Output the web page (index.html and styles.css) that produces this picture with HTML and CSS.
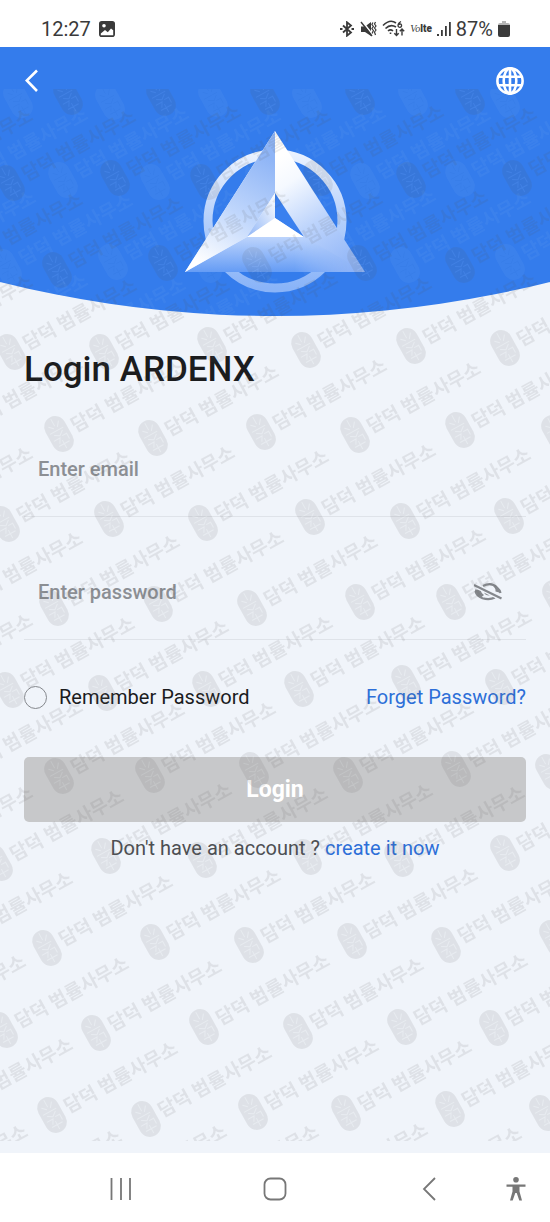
FILE: index.html
```html
<!DOCTYPE html>
<html lang="en">
<head>
    <meta charset="utf-8">
    <meta name="viewport" content="width=device-width, initial-scale=1">
    <title>Login ARDENX</title>
    <link rel="stylesheet" href="styles.css">
</head>
<body>
    <div class="status-bar">
        <span class="clock">12:27</span>
        <svg class="photo-icon" width="16" height="16" viewBox="0 0 16 16">
            <rect x="0.8" y="0.8" width="14.4" height="14.4" rx="2" fill="#3a3a3a" stroke="#3a3a3a" stroke-width="1.6"/>
            <path d="M1.800 12.500L6 9l2.800 2.200L12 7.500l2.200 1.800v4.900H1.800z" fill="#fff"/>
            <circle cx="5" cy="4.8" r="1.8" fill="#fff"/>
        </svg>
        <div class="status-icons">
            <svg width="16" height="16" viewBox="0 0 16 16" fill="none" stroke="#3a3a3a" stroke-width="1.8">
                <path d="M4 4.5l8 7-4 3.2V1.300l4 3.200-8 7"/>
                <path d="M1 8h2.500M12.500 8H15" stroke-width="2.200"/>
            </svg>
            <svg width="17" height="16" viewBox="0 0 17 16">
                <path d="M1 5.5h4L11 1v14l-6-4H1z" fill="#3a3a3a"/>
                <path d="M2 0l11 14" stroke="#fff" stroke-width="1.600"/>
                <path d="M1 1l11 14" stroke="#3a3a3a" stroke-width="1.4"/>
                <path d="M12.900 1.500l-1 2 1.500 2-1.500 2 1.500 2-1.300 3M15.500 1l-1 2 1.500 2-1.500 2 1.500 2-1.500 2 1 3" fill="none" stroke="#3a3a3a" stroke-width="1.2"/>
            </svg>
            <svg class="wifi" width="23" height="17" viewBox="0 0 23 17" fill="none" stroke="#3a3a3a" stroke-width="1.6">
                <path d="M1 5.5Q8 -1.5 14 3M3.5 8.5Q8.5 3.5 14 7M6 11q2.500-2.200 5 0"/>
                <path d="M8.500 12.500v1.500"/>
                <path d="M19 1.500Q16 3 16 5.500a1.800 1.800 0 1 0 3-1.300q-1.500-.6-2.700.6" stroke-width="1.300"/>
                <path d="M14.500 9v6.500m-2.200-2.200l2.200 2.200 2.200-2.200M20 15.500V9m-2.200 2.200L20 9l2.200 2.200" stroke-width="1.400"/>
            </svg>
            <span class="volte"><i>Vo</i><b>lte</b></span>
            <svg class="signal" width="14" height="16" viewBox="0 0 14 16" fill="#3a3a3a">
                <path d="M0 13h2v2H0zM4 9h1.800v6H4zM8 5h1.800v10H8zM12 1h1.800v14H12z"/>
            </svg>
            <span class="percent">87%</span>
            <svg width="12" height="16" viewBox="0 0 12 16">
                <path d="M4 0h4v2h2q2 0 2 2v2H0V4q0-2 2-2h2z" fill="#b5b5b5"/>
                <path d="M0 4h12v10q0 2-2 2H2q-2 0-2-2z" fill="#3a3a3a"/>
            </svg>
        </div>
    </div>

    <main class="app">
        <header class="hero">
            <svg class="marks marks-light" id="lightMarks" aria-hidden="true"></svg>
            <div class="toolbar">
                <button class="icon-button" type="button" aria-label="Back">
                    <svg width="14" height="24" viewBox="0 0 14 24" fill="none" stroke="#fff" stroke-width="2.600">
                        <path d="M12 1.500L1.800 11.500 12 22"/>
                    </svg>
                </button>
                <button class="icon-button" type="button" aria-label="Language">
                    <svg width="28" height="28" viewBox="0 0 28 28" fill="none" stroke="#fff" stroke-width="2.600">
                        <circle cx="14" cy="14" r="12.600"/>
                        <ellipse cx="14" cy="14" rx="6.300" ry="12.600"/>
                        <path d="M14 1.400v25.200M3 9.800h22M3 18.200h22"/>
                    </svg>
                </button>
            </div>
            <svg class="logo" width="180" height="164" viewBox="0 0 180 164" role="img" aria-label="ARDENX logo">
                <defs>
                    <linearGradient id="ring" x1="0" y1="0" x2="0" y2="1">
                        <stop offset="0" stop-color="#eaf2ff"/>
                        <stop offset="0.500" stop-color="#b4cffb"/>
                        <stop offset="1" stop-color="#8ab4f8"/>
                    </linearGradient>
                    <linearGradient id="leftFace" gradientUnits="userSpaceOnUse" x1="88" y1="30" x2="25" y2="140">
                        <stop offset="0" stop-color="#8fb5f6"/>
                        <stop offset="0.500" stop-color="#bfd6fc"/>
                        <stop offset="1" stop-color="#fff"/>
                    </linearGradient>
                    <linearGradient id="rightFace" gradientUnits="userSpaceOnUse" x1="90" y1="30" x2="165" y2="142">
                        <stop offset="0" stop-color="#fff"/>
                        <stop offset="0.200" stop-color="#f5f9ff"/>
                        <stop offset="0.550" stop-color="#bdd4fc"/>
                        <stop offset="1" stop-color="#8db3f7"/>
                    </linearGradient>
                    <linearGradient id="bottomFace" gradientUnits="userSpaceOnUse" x1="90" y1="107" x2="90" y2="142">
                        <stop offset="0" stop-color="#bdd4fc"/>
                        <stop offset="1" stop-color="#659cf5"/>
                    </linearGradient>
                    <linearGradient id="bottomFade" gradientUnits="userSpaceOnUse" x1="110" y1="0" x2="165" y2="0">
                        <stop offset="0" stop-color="#fff"/>
                        <stop offset="1" stop-color="#000"/>
                    </linearGradient>
                    <mask id="bottomMask">
                        <rect width="180" height="164" fill="url(#bottomFade)"/>
                    </mask>
                    <linearGradient id="innerFace" x1="0" y1="1" x2="1" y2="0">
                        <stop offset="0" stop-color="#8fb5f6"/>
                        <stop offset="1" stop-color="#fff"/>
                    </linearGradient>
                </defs>
                <circle cx="90" cy="91" r="67" fill="none" stroke="url(#ring)" stroke-width="9"/>
                <path d="M90 1L180 142H0z" fill="url(#rightFace)"/>
                <path d="M0 142l62-35h57l61 35z" fill="url(#bottomFace)" mask="url(#bottomMask)"/>
                <path d="M90 1v62l-28 44L0 142z" fill="url(#leftFace)"/>
                <path d="M90 63v25l-28 19z" fill="url(#innerFace)"/>
                <path d="M90 63l29 44-29-19z" fill="#3a80ef"/>
                <path d="M62 107l28-19 29 19z" fill="#fff"/>
            </svg>
        </header>

        <form class="login-form">
            <h1>Login ARDENX</h1>
            <div class="field">
                <input type="email" placeholder="Enter email" aria-label="Enter email">
            </div>
            <div class="field">
                <input type="password" placeholder="Enter password" aria-label="Enter password">
                <button class="icon-button" type="button" aria-label="Show password">
                    <svg width="28" height="20" viewBox="0 0 28 20" fill="none" stroke="#85888d">
                        <path d="M9 4Q17-.5 23 5.500q3 2.500 3.500 5.500M1.500 9q1 5 7 7.200 7 2 12.500-.7" stroke-width="2.200"/>
                        <path d="M1 7.500Q.5 12 7 15.500L10 13Q6.500 10.500 7 7.500z" fill="#85888d" stroke="none"/>
                        <path d="M17.500 3q4.500 2.500 4 6.500l5.500 1.500Q25 4 17.500 3z" fill="#85888d" stroke="none"/>
                        <path d="M11 9.500q0 3 4.500 3" stroke-width="1.800"/>
                        <path d="M0 3.500L27.500 17" stroke="#f0f4fa" stroke-width="4"/>
                        <path d="M0 3L27.500 16.500" stroke-width="2.200"/>
                    </svg>
                </button>
            </div>
            <div class="options">
                <label class="remember"><input type="checkbox">Remember Password</label>
                <a href="#">Forget Password?</a>
            </div>
            <button class="submit" type="submit">Login</button>
            <p class="signup">Don't have an account ? <a href="#">create it now</a></p>
        </form>

        <svg class="marks marks-dark" id="darkMarks" aria-hidden="true"></svg>
    </main>

    <nav class="nav-bar">
        <button class="icon-button recents" type="button" aria-label="Recent apps">
            <svg width="22" height="22" viewBox="0 0 22 22" stroke="#777" stroke-width="1.800">
                <path d="M1.500 0v22M11 0v22M20 0v22"/>
            </svg>
        </button>
        <button class="icon-button" type="button" aria-label="Home">
            <svg width="24" height="24" viewBox="0 0 24 24" fill="none" stroke="#777" stroke-width="1.800">
                <rect x="1.500" y="1.500" width="21" height="21" rx="6"/>
            </svg>
        </button>
        <button class="icon-button" type="button" aria-label="Back">
            <svg width="14" height="24" viewBox="0 0 14 24" fill="none" stroke="#777" stroke-width="1.800">
                <path d="M13 1L2 12l11 11"/>
            </svg>
        </button>
        <button class="icon-button accessibility" type="button" aria-label="Accessibility">
            <svg width="20" height="24" viewBox="0 0 20 24" fill="#777">
                <circle cx="10" cy="2.800" r="2.800"/>
                <path d="M.5 7.500h19v2.200h-6v4.800l2.500 9h-2.700L10.700 16H9.300l-2.600 7.500H4l2.500-9V9.700h-6z"/>
            </svg>
        </button>
    </nav>

    <script>
        // centre of each stamp, x and y
        const darkStamps = [
            [68, 8], [161, 9], [265, 8], [360, 8], [470, 8],
            [-93, 93], [10, 94], [115, 89], [205, 93], [318, 89], [411, 91], [517, 89],
            [-43, 177], [57, 181], [163, 174], [257, 176], [362, 174], [460, 176],
            [-93, 259], [11, 263], [104, 263], [212, 256], [306, 261], [411, 257], [505, 259],
            [-43, 341], [59, 345], [153, 349], [261, 343], [355, 346], [460, 341], [556, 344],
            [-93, 431], [5, 435], [109, 430], [203, 434], [310, 428], [405, 432], [509, 427],
            [-43, 516], [54, 519], [158, 515], [252, 519], [360, 513], [451, 513], [557, 509],
            [-93, 598], [9, 601], [103, 604], [207, 600], [299, 600], [406, 594], [500, 598],
            [-43, 684], [59, 687], [150, 686], [254, 681], [348, 686], [456, 680], [550, 683],
            [-93, 770], [-2, 774], [106, 767], [202, 771], [307, 768], [399, 770], [505, 764],
            [-53, 856], [47, 859], [155, 853], [249, 856], [352, 852], [446, 856], [554, 849],
            [-100, 939], [3, 941], [96, 944], [204, 938], [298, 942], [402, 938], [494, 939],
            [-53, 1022], [52, 1026], [146, 1030], [253, 1023], [346, 1024], [450, 1020], [544, 1024],
            [-98, 1109], [-4, 1114], [101, 1109], [193, 1109], [302, 1107], [396, 1111]
        ];

        const lightStamps = [
            [18, 11], [110, 13], [213, 10], [307, 11], [413, 9], [505, 11],
            [-38, 92], [63, 91], [155, 93], [260, 90], [365, 92], [460, 90],
            [-90, 175], [7, 178], [113, 173], [207, 176], [310, 173], [405, 176], [510, 173],
            [-38, 258], [60, 262], [155, 258]
        ];

        function drawStamps(id, stamps) {
            document.getElementById(id).innerHTML = stamps.map(([x, y]) => {
                // the first row and the last column only show the seal
                const label = y > 20 && x < 535 ? '<text x="15" y="7">담덕 범률사무소</text>' : '';

                return `
                <g transform="translate(${x} ${y}) rotate(-29)">
                    <rect class="stamp" x="-11" y="-19" width="22" height="38" rx="11"/>
                    <path class="stamp-lines" d="M0-17v8M-6-11l4 4M6-12L2-7M-8-4h15M-5-1l5 3 5-4M-8 4h7l-3 5M2 3h5v6M-6 11h12M0 7v9"/>
                    ${label}
                </g>`;
            }).join('');
        }

        drawStamps('darkMarks', darkStamps);
        drawStamps('lightMarks', lightStamps);
    </script>
</body>
</html>
```

FILE: styles.css
```css
* {
    box-sizing: border-box;
}

body {
    display: flex;
    flex-direction: column;
    min-height: 100vh;
    margin: 0;
    background-color: white;
    color: #1b1c1e;
    font-family: Roboto, "Noto Sans CJK KR", sans-serif;
    font-size: 20px;
    line-height: 28px;
}

svg {
    display: block;
}

a {
    color: #2d6fd8;
    text-decoration: none;
}

.icon-button {
    padding: 0;
    border: 0;
    background: none;
    cursor: pointer;
}

/* phone status bar */
.status-bar {
    display: flex;
    align-items: center;
    height: 47px;
    padding: 10px 40px 0 41px;
    color: #3a3a3a;
}

.clock {
    margin-right: 8px;
}

.status-icons {
    display: flex;
    align-items: center;
    gap: 5px;
    margin-left: auto;
}

.volte {
    font-size: 10px;
    line-height: 16px;
}

.volte i {
    font-family: "Liberation Serif", serif;
}

.volte b {
    font-weight: 900;
}

/* app */
.app {
    position: relative;
    flex: 1;
    overflow: hidden;
    background-color: #f0f4fa;
}

.hero {
    position: relative;
    padding-bottom: 22px;
    background-color: #347cec;
    clip-path: ellipse(205% 420% at 50% -320%);
}

.toolbar {
    display: flex;
    align-items: center;
    justify-content: space-between;
    height: 67px;
    padding: 0 26px 0 25px;
}

.logo {
    position: relative;
    margin: 16px auto 0;
}

/* repeated office stamp */
.marks {
    position: absolute;
    top: 42px;
    left: 0;
    width: 100%;
    pointer-events: none;
}

.marks text {
    font-family: "Noto Sans CJK KR", sans-serif;
    font-size: 19px;
    font-weight: 700;
}

.marks-dark {
    height: calc(100% - 54px);
    fill: #555;
    opacity: 0.11;
}

.marks-light {
    height: calc(100% - 42px);
    fill: white;
    opacity: 0.04;
}

.stamp-lines {
    fill: none;
    stroke: #aaa;
    stroke-width: 1px;
}

/* form */
.login-form {
    padding: 34px 24px;
}

h1 {
    margin: 0 0 31px;
    font-size: 35px;
    font-weight: 500;
    line-height: 40px;
}

.field {
    display: flex;
    align-items: center;
    height: 96px;
    margin-bottom: 27px;
    padding: 0 24px 0 14px;
    border-bottom: 1px solid #dfe3e9;
}

.field input {
    flex: 1;
    min-width: 0;
    padding: 0;
    border: 0;
    outline: 0;
    background: none;
    color: inherit;
    font: inherit;
    font-weight: 500;
}

.field input::placeholder {
    color: #8c8f94;
    opacity: 1;
}

.options {
    display: flex;
    justify-content: space-between;
    margin: 43px 0 46px;
}

.remember {
    display: flex;
    align-items: center;
    gap: 12px;
}

.remember input {
    width: 23px;
    height: 23px;
    margin: 0;
    border: 1px solid #85888d;
    border-radius: 50%;
    appearance: none;
}

.remember input:checked {
    background-color: #347cec;
}

.submit {
    width: 100%;
    height: 65px;
    border: 0;
    border-radius: 5px;
    background-color: #c7c8ca;
    color: white;
    font: inherit;
    font-size: 23px;
    font-weight: 700;
}

.signup {
    margin: 12px 0 0;
    color: #4d4f53;
    text-align: center;
}

/* phone navigation */
.nav-bar {
    display: grid;
    grid-template-columns: 8% 28% 28% 28% 8%;
    align-items: center;
    justify-items: center;
    height: 69px;
    padding-top: 2px;
    background-color: white;
}

.recents {
    grid-column: 2;
}

.accessibility {
    justify-self: start;
}
```
